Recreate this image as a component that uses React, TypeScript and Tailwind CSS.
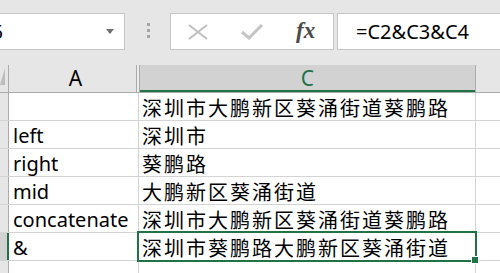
import React from "react";

const rows: { a: string; c: string }[] = [
  { a: "", c: "深圳市大鹏新区葵涌街道葵鹏路" },
  { a: "left", c: "深圳市" },
  { a: "right", c: "葵鹏路" },
  { a: "mid", c: "大鹏新区葵涌街道" },
  { a: "concatenate", c: "深圳市大鹏新区葵涌街道葵鹏路" },
  { a: "&", c: "深圳市葵鹏路大鹏新区葵涌街道" },
  { a: "", c: "" },
];

const font = { fontFamily: '"Noto Sans", "Noto Sans CJK SC", sans-serif' };

export default function App() {
  return (
    <div className="relative w-[500px] h-[273px] overflow-hidden bg-white text-black" style={font}>
      {/* formula bar */}
      <div className="flex h-[65px] bg-[#e6e6e6] pt-[13px]">
        <div className="-ml-[30px] w-[155px] h-[37px] shrink-0 bg-white border border-[#c6c6c6] flex items-center pl-[8px] pr-[10px]">
          <span className="text-[20px] leading-none">C5</span>
          <span className="ml-auto w-0 h-0 border-l-[4px] border-r-[4px] border-t-[5px] border-l-transparent border-r-transparent border-t-[#707070]" />
        </div>
        <div className="w-[45px] shrink-0 flex flex-col items-center gap-[3px] pt-[10px] pl-[1px]">
          <div className="w-[3px] h-[3px] bg-[#a6a6a6]" />
          <div className="w-[3px] h-[3px] bg-[#a6a6a6]" />
          <div className="w-[3px] h-[3px] bg-[#a6a6a6]" />
        </div>
        <div className="w-[164px] h-[37px] shrink-0 bg-white border border-[#c6c6c6] flex items-center pl-[17px]">
          <svg width="20" height="16" viewBox="0 0 20 16" className="shrink-0">
            <path d="M1 1 L19 15 M19 1 L1 15" stroke="#bfbfbf" strokeWidth="2" fill="none" />
          </svg>
          <svg width="22" height="16" viewBox="0 0 22 16" className="ml-[33px] shrink-0">
            <path d="M1 8 L8 14 L21 1" stroke="#c4c4c4" strokeWidth="3" fill="none" />
          </svg>
          <span
            className="ml-[33px] text-[23px] italic font-bold text-[#4a4a4a] leading-none -mt-[3px]"
            style={{ fontFamily: '"Liberation Serif", serif' }}
          >
            fx
          </span>
        </div>
        <div className="ml-[3px] flex-1 h-[37px] bg-white border border-[#c6c6c6] border-r-0 flex items-center pl-[18px]">
          <span className="text-[20px] leading-none">=C2&amp;C3&amp;C4</span>
        </div>
      </div>

      {/* column headers */}
      <div className="flex h-[28px] bg-[#e6e6e6] border-b border-[#ababab]">
        <div className="w-[9px] shrink-0 border-r border-[#ababab] pt-[3px]">
          <div className="w-0 h-0 border-b-[17px] border-l-[5px] border-l-transparent border-b-[#bdbdbd]" />
        </div>
        <div className="w-[128px] shrink-0 border-r border-[#ababab] flex items-center justify-center pl-[6px] text-[21px] leading-none">
          A
        </div>
        <div className="w-[3px] shrink-0 border-r border-[#ababab] bg-[#ececec]" />
        <div className="w-[336px] shrink-0 bg-[#d2d2d2] border-r border-[#ababab] flex items-center justify-center text-[21px] leading-none text-[#217346] shadow-[inset_0_-2px_0_#217346]">
          C
        </div>
        <div className="flex-1" />
      </div>

      {/* grid rows */}
      {rows.map((r, i) => {
        const sel = i === 5;
        return (
          <div key={i} className="flex h-[28px] border-b border-[#d4d4d4]">
            <div
              className={
                sel
                  ? "w-[9px] shrink-0 bg-[#d2d2d2] border-r-2 border-[#217346]"
                  : "w-[9px] shrink-0 bg-[#e6e6e6] border-r border-[#ababab]"
              }
            />
            <div className="w-[130px] shrink-0 border-r border-[#d4d4d4] pl-[4px] pt-[3px] text-[20px] leading-[24px] whitespace-nowrap">
              {r.a}
            </div>
            <div className="w-[337px] shrink-0 border-r border-[#d4d4d4] pl-[3px] pt-[3px] text-[20px] leading-[24px] tracking-[2px] whitespace-nowrap" style={{ fontFamily: '"Noto Sans CJK SC", sans-serif' }}>
              {r.c}
            </div>
            <div className="flex-1" />
          </div>
        );
      })}

      {/* active cell */}
      <div className="absolute left-[137px] top-[231px] w-[340px] h-[31px] border-2 border-[#217346] pointer-events-none" />
      <div className="absolute left-[471px] top-[256px] w-[8px] h-[8px] bg-[#217346] border border-white" />
    </div>
  );
}
